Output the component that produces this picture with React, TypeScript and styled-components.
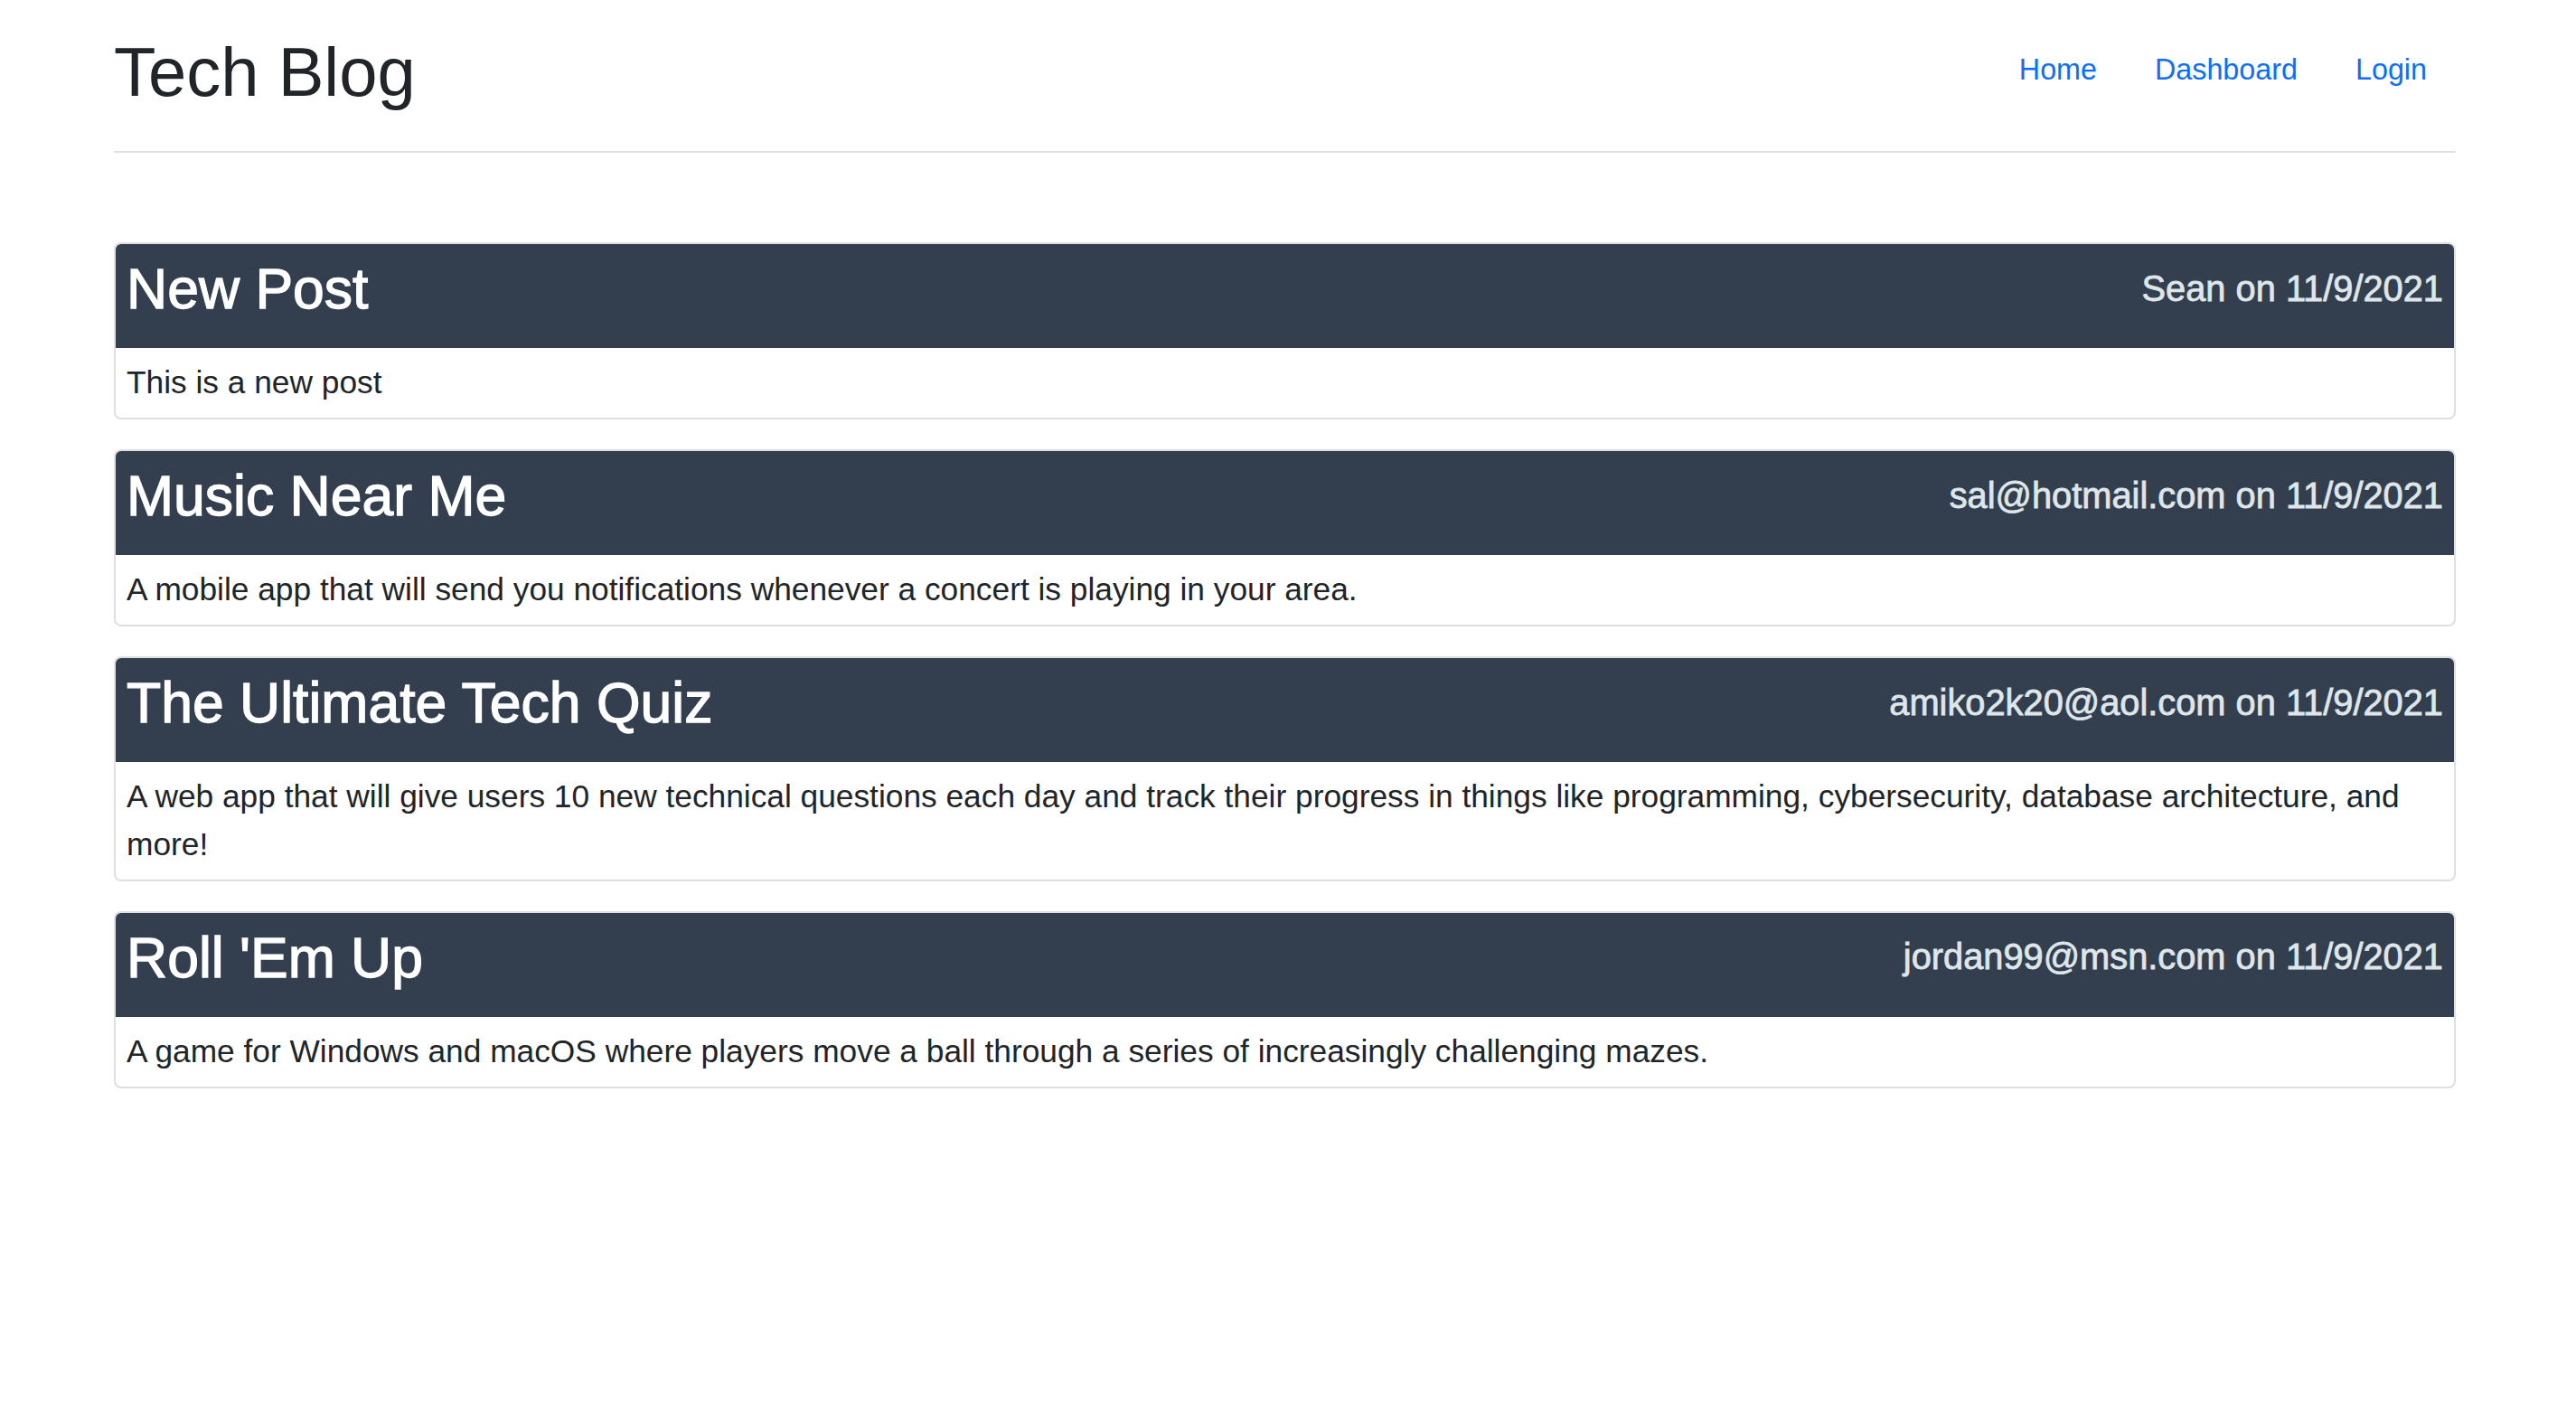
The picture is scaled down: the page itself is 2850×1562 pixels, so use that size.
import React from "react";
import styled, { createGlobalStyle } from "styled-components";

const GlobalStyle = createGlobalStyle`
  html, body {
    margin: 0;
    padding: 0;
    background: #ffffff;
  }
  body {
    font-family: "Liberation Sans", Arial, sans-serif;
    color: #212529;
  }
  * { box-sizing: border-box; }
`;

const Page = styled.div`
  padding: 0 133px 0 126px;
`;

const Header = styled.header`
  display: flex;
  justify-content: space-between;
  align-items: flex-start;
  padding: 35px 0 42px;
  border-bottom: 2px solid #dee2e6;
`;

const Brand = styled.h1`
  margin: 0;
  font-size: 76px;
  line-height: 90px;
  font-weight: 400;
  color: #212529;
`;

const Nav = styled.nav`
  display: flex;
  align-items: center;
`;

const NavLink = styled.a`
  display: block;
  padding: 18px 32px;
  font-size: 32.3px;
  line-height: 48px;
  color: #0d6efd;
  text-decoration: none;
`;

const PostList = styled.main`
  display: flex;
  flex-direction: column;
  gap: 33px;
  margin-top: 99px;
`;

const Card = styled.article`
  border: 2px solid rgba(0, 0, 0, 0.125);
  border-radius: 8px;
  overflow: hidden;
  background: #ffffff;
`;

const CardHeader = styled.div`
  display: flex;
  justify-content: space-between;
  align-items: center;
  padding: 12px;
  background: #333f4f;
`;

const PostTitle = styled.h2`
  margin: 0 0 16px;
  font-size: 62.5px;
  line-height: 1.2;
  font-weight: 400;
  color: #ffffff;
  -webkit-text-stroke: 1.3px #ffffff;
`;

const PostMeta = styled.h5`
  margin: 0 0 16px;
  font-size: 39.8px;
  line-height: 1.2;
  font-weight: 400;
  color: #dfe6e9;
  -webkit-text-stroke: 0.8px #dfe6e9;
`;

const CardBody = styled.div`
  padding: 12px;
  font-size: 35.3px;
  line-height: 1.5;
  color: #212529;
`;

const posts = [
  {
    title: "New Post",
    author: "Sean",
    date: "11/9/2021",
    body: "This is a new post",
  },
  {
    title: "Music Near Me",
    author: "sal@hotmail.com",
    date: "11/9/2021",
    body: "A mobile app that will send you notifications whenever a concert is playing in your area.",
  },
  {
    title: "The Ultimate Tech Quiz",
    author: "amiko2k20@aol.com",
    date: "11/9/2021",
    body: "A web app that will give users 10 new technical questions each day and track their progress in things like programming, cybersecurity, database architecture, and more!",
  },
  {
    title: "Roll 'Em Up",
    author: "jordan99@msn.com",
    date: "11/9/2021",
    body: "A game for Windows and macOS where players move a ball through a series of increasingly challenging mazes.",
  },
];

export default function App() {
  return (
    <>
      <GlobalStyle />
      <Page>
        <Header>
          <Brand>Tech Blog</Brand>
          <Nav>
            <NavLink href="#">Home</NavLink>
            <NavLink href="#">Dashboard</NavLink>
            <NavLink href="#">Login</NavLink>
          </Nav>
        </Header>
        <PostList>
          {posts.map((p) => (
            <Card key={p.title}>
              <CardHeader>
                <PostTitle>{p.title}</PostTitle>
                <PostMeta>
                  {p.author} on {p.date}
                </PostMeta>
              </CardHeader>
              <CardBody>{p.body}</CardBody>
            </Card>
          ))}
        </PostList>
      </Page>
    </>
  );
}
